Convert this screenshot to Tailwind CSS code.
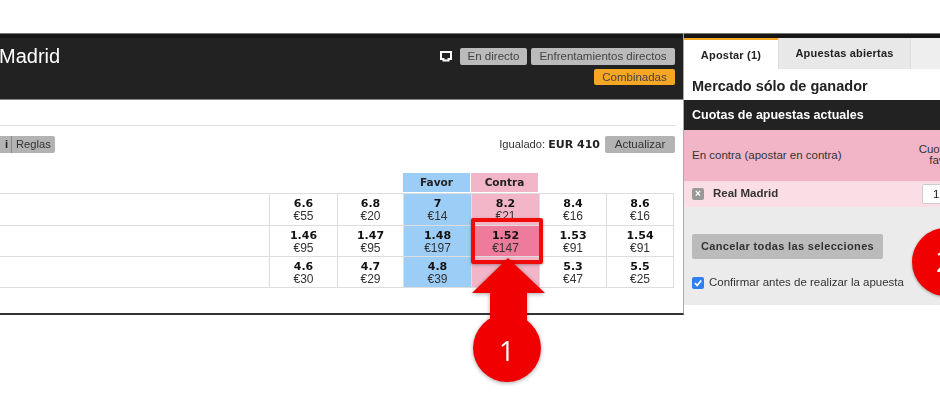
<!DOCTYPE html>
<html><head><meta charset="utf-8"><script src="https://cdn.jsdelivr.net/npm/@tailwindcss/browser@4"></script></head>
<body class="bg-white">
<div class="relative w-[940px] h-[400px] overflow-hidden font-['Liberation_Sans',sans-serif] text-[#333] blur-[0.35px]">
  <div class="pt-[33px] flex items-start">
    <div class="w-[684px] h-[282px] shrink-0 border-b-[2px] border-b-[#333] border-r border-r-[#aaa] flex flex-col">
      <div class="h-[67px] bg-[#222] border-t border-t-[#777] border-b border-b-[#888] shadow-[inset_0_4px_0_#161616] flex justify-between pr-2 pt-[5px]">
        <div class="text-white text-[20px] leading-[28px] pt-[3px] ml-[-1px] font-medium">Madrid</div>
        <div class="flex flex-col items-end gap-[4px] pt-[9px] text-[11.500px] text-[#444]">
          <div class="flex items-center gap-[4px]">
            <svg class="mr-[4px]" width="12" height="11" viewBox="0 0 12 11"><path d="M1 1h10v7h-2.500v1.500h-5v-1.500h-2.500z" fill="#222" stroke="#fff" stroke-width="2"/></svg>
            <span class="w-[67px] text-center h-[17px] bg-[#bbb] rounded-[2px] leading-[17px]">En directo</span>
            <span class="w-[144px] text-center h-[17px] bg-[#bbb] rounded-[2px] leading-[17px]">Enfrentamientos directos</span>
          </div>
          <span class="w-[81px] text-center h-[16px] bg-[#f5a623] rounded-[2px] leading-[16px]">Combinadas</span>
        </div>
      </div>
      <div class="mt-[25px] mr-2 border-t border-[#ddd] pt-[10px] h-[28px] flex justify-between items-center text-[11.200px]">
        <div class="flex h-[17px] bg-[#b3b3b3] rounded-r-[2px] leading-[17px]">
          <span class="font-bold w-[12px] text-right pr-[3px] border-r border-[#888] text-[#222]">i</span>
          <span class="px-[4px]">Reglas</span>
        </div>
        <div class="flex items-center gap-[5px] h-[17px]">
          <span class="leading-[17px]">Igualado: <b class="text-[#222] font-['DejaVu_Sans',sans-serif] text-[11px] leading-[17px]">EUR 410</b></span>
          <span class="h-[17px] w-[70px] text-center bg-[#b3b3b3] rounded-[2px] leading-[17px] text-[11.500px]">Actualizar</span>
        </div>
      </div>
      <div class="mt-[20px] ml-[403px] flex gap-[1px] font-['DejaVu_Sans',sans-serif] text-[10.500px] font-bold text-[#222] text-center leading-[19px]">
        <span class="w-[67px] h-[19px] bg-[#9bcdf6]">Favor</span>
        <span class="w-[67px] h-[19px] bg-[#f3b6c8]">Contra</span>
      </div>
      <div class="mt-[1px] mr-[9px] grid grid-cols-[269px_68px_66px_68px_68px_67px_1fr] grid-rows-[31px_31px_31px] border-y border-[#ddd] text-center text-[12px] leading-[12px] text-[#333] [&>div]:border-l [&>div]:border-[#ddd] [&>div]:pt-[4px] [&_b]:block [&_b]:font-['DejaVu_Sans',sans-serif] [&_b]:text-[11px] [&_b]:leading-[12px] [&_b]:text-[#111]">
        <div class="!border-l-0"></div><div><b>6.6</b>€55</div><div><b>6.8</b>€20</div><div class="bg-[#9bcdf6]"><b>7</b>€14</div><div class="bg-[#f3b6c8]"><b>8.2</b>€21</div><div><b>8.4</b>€16</div><div class="border-r"><b>8.6</b>€16</div>
        <div class="!border-l-0 border-t"></div><div class="border-t"><b>1.46</b>€95</div><div class="border-t"><b>1.47</b>€95</div><div class="border-t bg-[#9bcdf6]"><b>1.48</b>€197</div><div class="border-t bg-[#ee7b9b]"><b>1.52</b>€147</div><div class="border-t"><b>1.53</b>€91</div><div class="border-t border-r"><b>1.54</b>€91</div>
        <div class="!border-l-0 border-t"></div><div class="border-t"><b>4.6</b>€30</div><div class="border-t"><b>4.7</b>€29</div><div class="border-t bg-[#9bcdf6]"><b>4.8</b>€39</div><div class="border-t bg-[#f3b6c8]"><b>5</b>€30</div><div class="border-t"><b>5.3</b>€47</div><div class="border-t border-r"><b>5.5</b>€25</div>
      </div>
    </div>
    <div class="flex-1 min-w-0 h-[272px] border-t border-t-[#777] flex flex-col overflow-hidden">
      <div class="h-[4px] bg-[#161616] shrink-0"></div>
      <div class="flex h-[31px] shrink-0 text-[11px] font-bold tracking-[0.2px] text-[#222] leading-[31px]">
        <span class="w-[94px] text-center bg-white border-t-2 border-[#f5a623]">Apostar (1)</span>
        <span class="w-[133px] text-center bg-[#e8e8e8] border-x border-[#ddd]">Apuestas abiertas</span>
        <span class="flex-1 bg-[#eee]"></span>
      </div>
      <div class="h-[31px] shrink-0 pl-[8px] text-[14.500px] font-bold text-[#222] leading-[35px]">Mercado sólo de ganador</div>
      <div class="h-[30px] shrink-0 bg-[#222] pl-[8px] text-white font-bold text-[12.500px] leading-[31px]">Cuotas de apuestas actuales</div>
      <div class="h-[51px] shrink-0 bg-[#f2b5c7] pl-[8px] pr-0 flex items-center text-[11.500px] relative">
        <span>En contra (apostar en contra)</span>
        <span class="absolute left-[232px] top-[14px] w-[52px] text-center leading-[11px]">Cuota de favor</span>
      </div>
      <div class="h-[26px] shrink-0 bg-[#fadde5] pl-[8px] flex items-center text-[11.500px] font-bold">
        <span class="w-[12px] h-[12px] bg-[#999] rounded-[2px] text-white text-[10px] leading-[12px] text-center mr-[9px]">×</span>
        <span>Real Madrid</span>
        <span class="ml-[auto] w-[28px] h-[20px] bg-white border border-[#ccc] rounded-l-[2px] pl-[10px] text-[#222] font-normal leading-[18px] mr-[-10px]">1</span>
      </div>
      <div class="flex-1 bg-[#ebebeb] pl-[8px] pt-[27px]">
        <div class="w-[191px] h-[25px] bg-[#bbb] rounded-[2px] text-center leading-[24px] text-[11px] font-bold tracking-[0.35px] text-[#333]">Cancelar todas las selecciones</div>
        <div class="mt-[15px] flex items-center text-[11.500px] gap-[5px]">
          <svg width="12" height="12" viewBox="0 0 12 12"><rect width="12" height="12" rx="2" fill="#2f7ff0"/><path d="M3 6.200l2.200 2.300 4-5" fill="none" stroke="#fff" stroke-width="1.800"/></svg>
          <span>Confirmar antes de realizar la apuesta</span>
        </div>
      </div>
    </div>
  </div>
  <div class="absolute left-[471px] top-[218px] w-[72px] h-[46px] border-[4px] border-[#f00a0a] rounded-[2px] shadow-[0_1px_3px_rgba(0,0,0,.3)]"></div>
  <svg class="absolute left-[460px] top-[250px] drop-shadow-[0_1px_2px_rgba(0,0,0,.35)]" width="100" height="140" viewBox="0 0 100 140"><path d="M48 8L85 43H67V75H30V43H12z" fill="#f00000"/><circle cx="47" cy="98" r="34" fill="#f00000"/></svg>
  <span class="absolute left-[499px] top-[335px] text-white text-[27px] leading-[32px] font-['Open_Sans',sans-serif]">1</span>
  <div class="absolute left-[912px] top-[228px] w-[68px] h-[68px] rounded-full bg-[#f00000] shadow-[0_1px_3px_rgba(0,0,0,.35)]"></div>
  <span class="absolute left-[936px] top-[246px] text-white text-[27px] leading-[32px] font-['Open_Sans',sans-serif]">2</span>
</div>
</body></html>
